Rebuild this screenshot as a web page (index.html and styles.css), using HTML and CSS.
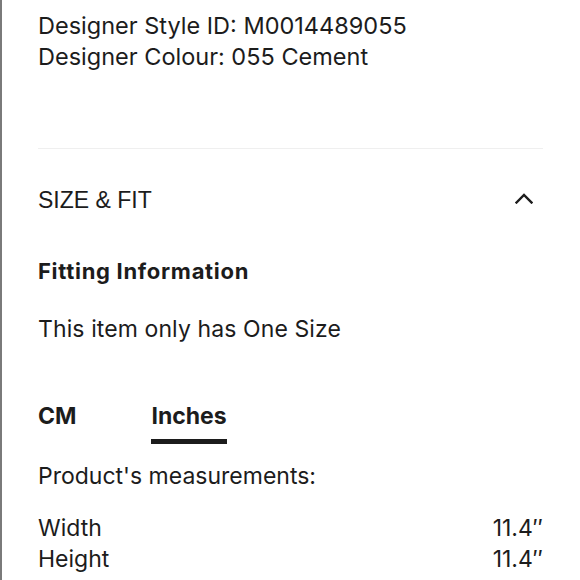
FILE: index.html
```html
<!DOCTYPE html>
<html lang="en">
<head>
<meta charset="utf-8">
<title>Size &amp; Fit</title>
<link rel="stylesheet" href="styles.css">
</head>
<body>
<div class="page">
  <div class="specs">
    <p>Designer Style ID: M0014489055</p>
    <p>Designer Colour: 055 Cement</p>
  </div>
  <hr class="divider">
  <div class="section-head">
    <span class="section-title">SIZE &amp; FIT</span>
    <svg class="chevron" width="18" height="11" viewBox="0 0 18 11" aria-hidden="true">
      <polyline points="1.5,9.5 9,2 16.5,9.5" fill="none" stroke="#1c1c1c" stroke-width="2.4" stroke-linecap="square"/>
    </svg>
  </div>
  <h3 class="fit-title">Fitting Information</h3>
  <p class="fit-text">This item only has One Size</p>
  <div class="tabs">
    <span class="tab">CM</span>
    <span class="tab active">Inches</span>
  </div>
  <p class="measure-title">Product's measurements:</p>
  <div class="rows">
    <div class="row"><span>Width</span><span>11.4″</span></div>
    <div class="row"><span>Height</span><span>11.4″</span></div>
  </div>
</div>
</body>
</html>
```
FILE: styles.css
```css
html, body {
  margin: 0;
  padding: 0;
  background: #ffffff;
}
body {
  border-left: 2px solid #7a7a7a;
  min-height: 580px;
  box-sizing: border-box;
  font-family: Inter, "Noto Sans", sans-serif;
  color: #1c1c1c;
}
.page {
  padding: 10px 37px 0 36px;
}
.specs p {
  margin: 0;
  font-size: 23.5px;
  line-height: 31px;
}
.divider {
  border: 0;
  border-top: 1px solid #efefef;
  margin: 76px 0 0;
  height: 0;
}
.section-head {
  margin-top: 38px;
  display: flex;
  align-items: center;
  justify-content: space-between;
}
.section-title {
  font-family: "Liberation Sans", Arial, sans-serif;
  font-size: 23px;
  line-height: 26px;
}
.chevron {
  margin-right: 10px;
  margin-top: -4px;
}
.fit-title {
  margin: 45px 0 0;
  font-size: 22px;
  line-height: 26px;
  font-weight: 700;
  letter-spacing: 0.7px;
}
.fit-text {
  margin: 30px 0 0;
  font-size: 23px;
  line-height: 31px;
  letter-spacing: 0.1px;
}
.tabs {
  margin-top: 57px;
  display: flex;
  gap: 75px;
}
.tab {
  font-size: 23px;
  line-height: 28px;
  font-weight: 700;
  padding-bottom: 9px;
  border-bottom: 5px solid transparent;
}
.tab.active {
  border-bottom-color: #1c1c1c;
}
.measure-title {
  margin: 17px 0 0;
  font-size: 23px;
  line-height: 31px;
}
.rows {
  margin-top: 21px;
}
.row {
  display: flex;
  justify-content: space-between;
  font-size: 23px;
  line-height: 31px;
}
```
